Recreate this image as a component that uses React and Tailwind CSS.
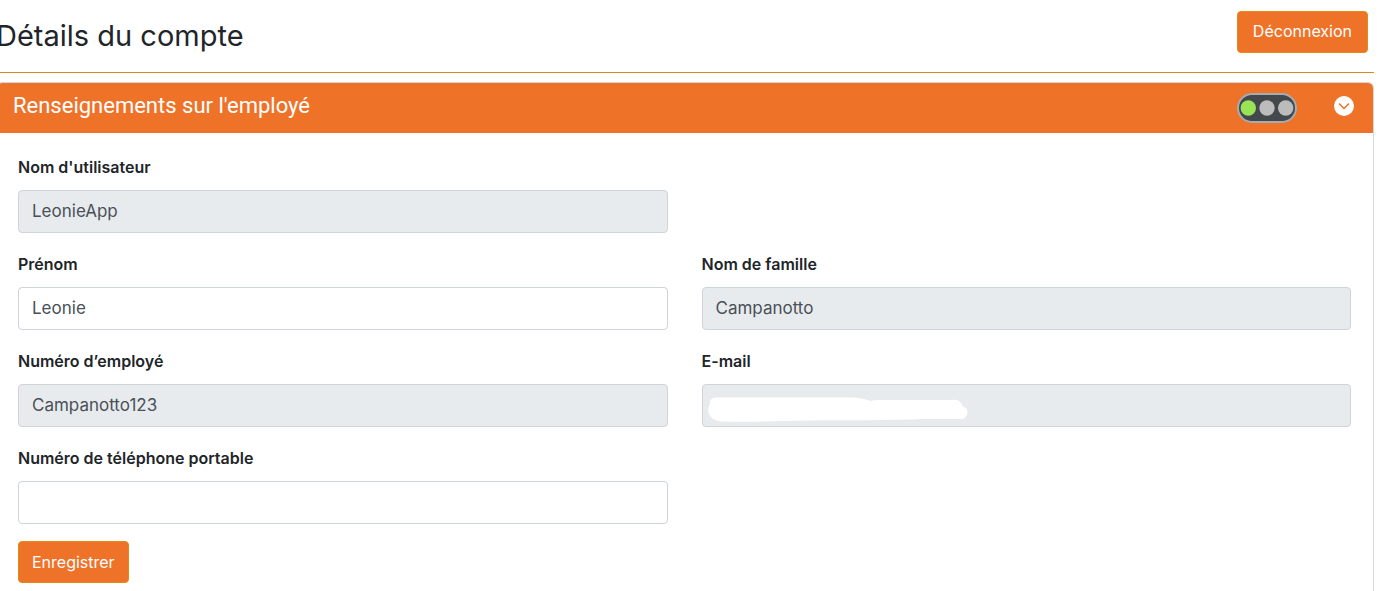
import { useState } from "react";

const inputStyle =
  "block w-full h-[43px] rounded border border-[#ced4da] px-[13px] pb-0.5 text-[17px] text-[#495057] outline-none";

function Field({ id, label, value, onChange, readOnly, type = "text", children }) {
  return (
    <div>
      <label htmlFor={id} className="block pb-[11px] text-base leading-6 font-semibold text-[#212529]">
        {label}
      </label>
      <div className="relative">
        <input
          id={id}
          type={type}
          value={value}
          readOnly={readOnly}
          onChange={onChange}
          className={`${inputStyle} ${readOnly ? "bg-[#e8ebee]" : "bg-white"}`}
        />
        {children}
      </div>
    </div>
  );
}

function StatusLights() {
  return (
    <svg width="60" height="30" viewBox="0 0 60 30" aria-hidden="true">
      <rect x="1" y="1" width="58" height="28" rx="14" fill="#43484d" stroke="#a5abb0" strokeWidth="2" />
      <circle cx="11.3" cy="15" r="7.7" fill="#98e455" />
      <circle cx="30" cy="15" r="7.7" fill="#bcbcbc" />
      <circle cx="48.7" cy="15" r="7.7" fill="#bcbcbc" />
    </svg>
  );
}

function HiddenEmail() {
  return (
    <svg className="absolute left-1.5 top-3" width="262" height="28" viewBox="0 0 262 28" aria-hidden="true">
      <path
        d="M8 1.5H140C151 1.5 156 3 163 5Q166 4 170 4H244C251 3 254 7 254.5 10.5C260 11 262 19 255 23H213C180 24.5 140 24 100 24.5Q45 26 13 25.5C-2 24 -1 10 2 9C1 5 3 2 8 1.5Z"
        fill="#fff"
      />
    </svg>
  );
}

function App() {
  const [firstName, setFirstName] = useState("Leonie");
  const [phone, setPhone] = useState("");
  const [open, setOpen] = useState(true);

  return (
    <div className="flex min-h-screen flex-col overflow-hidden bg-white pr-3.5 font-['Inter',sans-serif] text-[#212529]">
      <header className="flex h-[73px] items-start justify-between border-b border-[#d98a1c] pt-[11px] pr-1.5">
        <h1 className="-ml-1 text-[29px] leading-[50px]">Détails du compte</h1>
        <button
          type="button"
          className="h-[42px] rounded border border-[#e48a14] bg-[#ef7229] px-[15px] pb-0.5 text-base text-white"
        >
          Déconnexion
        </button>
      </header>

      <section className="-ml-1 mt-[9px] flex grow flex-col rounded-t-md border border-b-0 border-[#d5d7d9]">
        <div className="flex h-[50px] items-center rounded-t-[5px] bg-[#ef7229] pl-4 pr-[18px] text-white">
          <h2 className="grow pb-1 font-['Roboto',sans-serif] text-[22px] leading-7">
            Renseignements sur l'employé
          </h2>
          <StatusLights />
          <button
            type="button"
            aria-label="Renseignements"
            aria-expanded={open}
            onClick={() => setOpen(!open)}
            className="mb-1 ml-9"
          >
            <svg width="22" height="22" viewBox="0 0 22 22">
              <circle cx="11" cy="11" r="10" fill="#fff" />
              <path d="M6 8.5L11 13.5L16 8.5" fill="none" stroke="#ef7229" strokeWidth="1.5" />
            </svg>
          </button>
        </div>

        {open && (
          <form className="pt-[22px] pr-[22px] pb-2 pl-[21px]" onSubmit={(e) => e.preventDefault()}>
            <div className="grid grid-cols-2 gap-x-[34px] gap-y-[19px]">
              <Field id="username" label="Nom d'utilisateur" value="LeonieApp" readOnly />
              <div></div>
              <Field
                id="firstName"
                label="Prénom"
                value={firstName}
                onChange={(e) => setFirstName(e.target.value)}
              />
              <Field id="lastName" label="Nom de famille" value="Campanotto" readOnly />
              <Field id="employeeNumber" label="Numéro d’employé" value="Campanotto123" readOnly />
              <Field id="email" label="E-mail" type="email" value="" readOnly>
                <HiddenEmail />
              </Field>
              <Field
                id="phone"
                label="Numéro de téléphone portable"
                type="tel"
                value={phone}
                onChange={(e) => setPhone(e.target.value)}
              />
            </div>
            <button
              type="submit"
              className="mt-[17px] h-[42px] rounded border border-[#e48a14] bg-[#ef7229] px-[13px] text-base text-white"
            >
              Enregistrer
            </button>
          </form>
        )}
      </section>
    </div>
  );
}

export default App;
